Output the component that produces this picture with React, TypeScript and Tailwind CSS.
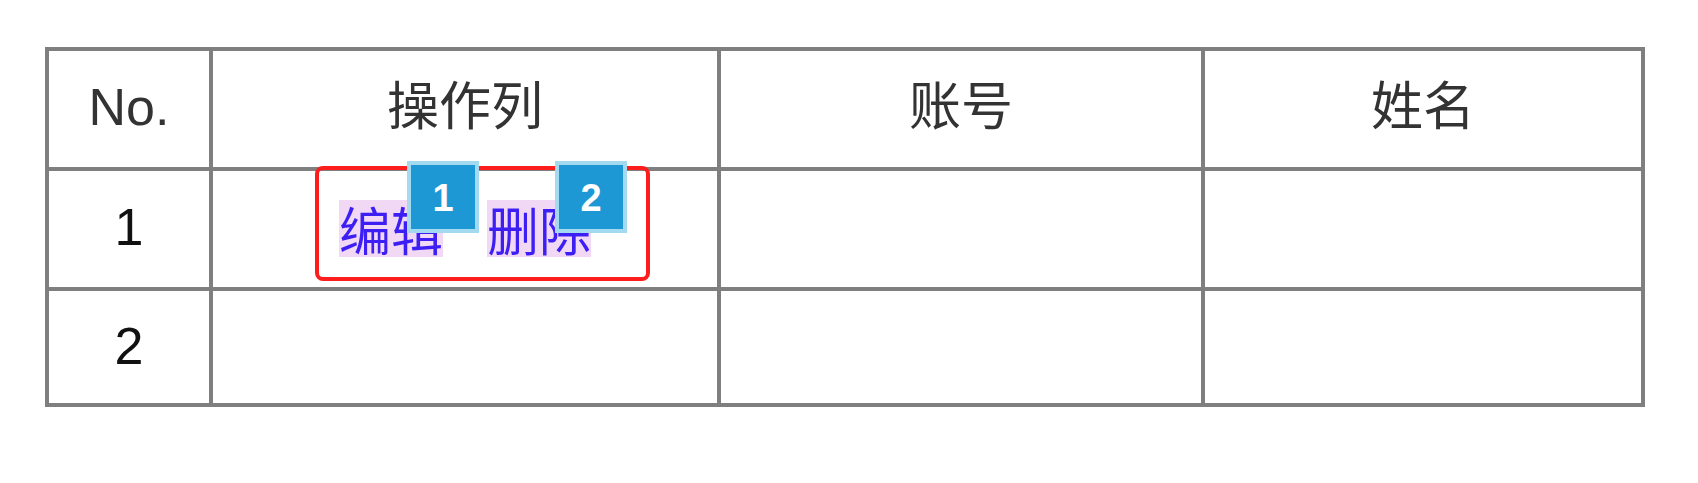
const headers = ['No.', '操作列', '账号', '姓名'];

const cellWidths = ['w-[160px]', 'w-[508px]', 'w-[484px]', 'w-[440px]'];

const Badge = ({ n }: { n: number }) => (
  <span className="absolute -top-[39px] left-[calc(100%-36px)] z-20 flex h-[72px] w-[72px] items-center justify-center border-4 border-[#a3daf0] bg-[#1e98d5] pt-[2px] font-['Liberation_Sans',sans-serif] text-[38px] leading-none font-bold text-white">
    {n}
  </span>
);

const ActionLink = ({ label, n }: { label: string; n: number }) => (
  <span className="relative inline-block h-[57px] bg-[#f1d9f6] text-[52px] leading-[57px] text-[#3d1ff4]">
    {label}
    <Badge n={n} />
  </span>
);

export default function App() {
  return (
    <div className="min-h-[483px] w-[1698px] bg-white pt-[47px] pl-[45px] font-['Liberation_Sans','Noto_Sans_CJK_SC',sans-serif]">
      <div className="w-[1600px] border-4 border-[#7f7f7f]">
        {/* header */}
        <div className="flex h-[116px]">
          {headers.map((h, i) => (
            <div
              key={h}
              className={`flex items-center justify-center pb-[5px] text-[52px] leading-none text-[#333333] ${cellWidths[i]} ${i > 0 ? 'border-l-4 border-[#7f7f7f]' : ''}`}
            >
              {h}
            </div>
          ))}
        </div>

        {/* row 1 */}
        <div className="flex h-[120px] border-t-4 border-[#7f7f7f]">
          <div className="flex w-[160px] items-center justify-center pb-[5px] text-[52px] leading-none text-[#111111]">1</div>
          <div className="relative flex w-[508px] items-center justify-center gap-[44px] border-l-4 border-[#7f7f7f] pb-[2px] font-['Noto_Sans_CJK_SC',sans-serif]">
            <ActionLink label="编辑" n={1} />
            <ActionLink label="删除" n={2} />
            {/* annotation box */}
            <div className="pointer-events-none absolute -top-[5px] left-[102px] z-10 h-[115px] w-[335px] rounded-[8px] border-4 border-[#fd1d1d]" />
          </div>
          <div className="w-[484px] border-l-4 border-[#7f7f7f]" />
          <div className="w-[440px] border-l-4 border-[#7f7f7f]" />
        </div>

        {/* row 2 */}
        <div className="flex h-[116px] border-t-4 border-[#7f7f7f]">
          <div className="flex w-[160px] items-center justify-center pb-[2px] text-[52px] leading-none text-[#111111]">2</div>
          <div className="w-[508px] border-l-4 border-[#7f7f7f]" />
          <div className="w-[484px] border-l-4 border-[#7f7f7f]" />
          <div className="w-[440px] border-l-4 border-[#7f7f7f]" />
        </div>
      </div>
    </div>
  );
}
